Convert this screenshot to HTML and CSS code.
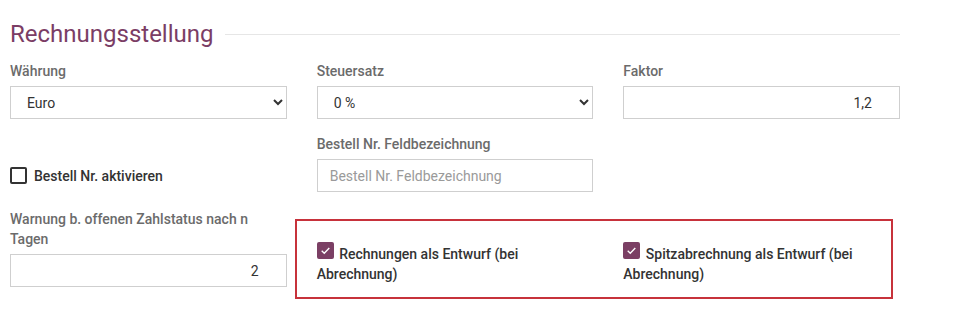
FILE: index.html
```html
<!DOCTYPE html>
<html lang="de">
<head>
<meta charset="utf-8">
<title>Rechnungsstellung</title>
<link rel="stylesheet" href="styles.css">
</head>
<body>
<section class="panel">
  <div class="section-head">
    <h2 class="section-title">Rechnungsstellung</h2>
    <span class="section-rule"></span>
  </div>
  <div class="form-grid">
    <div class="field">
      <label class="field-label">Währung</label>
      <select class="control select"><option>Euro</option></select>
    </div>
    <div class="field">
      <label class="field-label">Steuersatz</label>
      <select class="control select"><option>0 %</option></select>
    </div>
    <div class="field">
      <label class="field-label">Faktor</label>
      <input class="control num" type="text" value="1,2">
    </div>

    <div class="field field-check">
      <label class="check"><span class="box"></span><span class="check-text">Bestell Nr. aktivieren</span></label>
    </div>
    <div class="field">
      <label class="field-label">Bestell Nr. Feldbezeichnung</label>
      <input class="control" type="text" placeholder="Bestell Nr. Feldbezeichnung">
    </div>
    <div class="field"></div>

    <div class="field">
      <label class="field-label">Warnung b. offenen Zahlstatus nach n Tagen</label>
      <input class="control num" type="text" value="2">
    </div>
    <div class="field highlight">
      <label class="check check-wrap"><span class="box checked"><svg viewBox="0 0 16 16" width="11" height="11"><path d="M2.5 8.5 L6.2 12 L13.5 4.5" fill="none" stroke="#fff" stroke-width="2"/></svg></span> Rechnungen als Entwurf (bei Abrechnung)</label>
      <label class="check check-wrap"><span class="box checked"><svg viewBox="0 0 16 16" width="11" height="11"><path d="M2.5 8.5 L6.2 12 L13.5 4.5" fill="none" stroke="#fff" stroke-width="2"/></svg></span> Spitzabrechnung als Entwurf (bei Abrechnung)</label>
    </div>
  </div>
</section>
</body>
</html>
```
FILE: styles.css
```css
* { box-sizing: border-box; }
html, body { margin: 0; background: #fff; }
body {
  font-family: Roboto, "Liberation Sans", Arial, sans-serif;
  font-size: 14px;
  color: #333;
  min-height: 329px;
}
.panel {
  width: 890px;
  margin-left: 10px;
  padding-top: 18px;
  padding-bottom: 30px;
}
.section-head {
  display: flex;
  align-items: center;
  height: 32px;
}
.section-title {
  margin: 0;
  font-size: 24px;
  font-weight: 400;
  line-height: 32px;
  color: #7b3d65;
}
.section-rule {
  flex: 1;
  height: 1px;
  background: #e6e6e6;
  margin-left: 11px;
}
.form-grid {
  display: grid;
  grid-template-columns: repeat(3, 1fr);
  column-gap: 30px;
  row-gap: 15px;
  margin-top: 11px;
}
.field {
  display: flex;
  flex-direction: column;
  justify-content: flex-end;
}
.field-label {
  font-weight: 500;
  color: #6b6b6b;
  line-height: 20px;
  margin-bottom: 5px;
}
.control {
  height: 33px;
  width: 100%;
  border: 1px solid #cfcfcf;
  border-radius: 0;
  background: #fff;
  font-family: inherit;
  font-size: 14px;
  color: #333;
  padding: 0 12px;
  outline: none;
}
.control::placeholder { color: #9a9a9a; }
.select { padding-left: 12px; }
.num { text-align: right; padding-right: 27px; }
.field-check {
  justify-content: flex-end;
}
.check {
  display: flex;
  align-items: center;
  height: 33px;
  font-weight: 500;
  color: #333;
}
.box {
  width: 17px;
  height: 17px;
  border: 2px solid #333;
  border-radius: 2px;
  background: #fff;
  margin-right: 7px;
  flex: none;
}
.box svg {
  display: block;
  margin: 1px auto 0;
}
.box.checked {
  background: #7b3f64;
  border-color: #7b3f64;
}
.highlight {
  grid-column: 2 / 4;
  display: grid;
  grid-template-columns: repeat(2, 1fr);
  column-gap: 30px;
  position: relative;
  align-items: start;
  padding-top: 35px;
  padding-bottom: 3px;
}
.highlight::before {
  content: "";
  position: absolute;
  left: -22px;
  right: 7px;
  top: 12px;
  bottom: -12px;
  border: 2px solid #c7323b;
  pointer-events: none;
}
.check-wrap {
  display: block;
  height: auto;
  line-height: 20px;
  padding-right: 40px;
}
.check-wrap .box {
  display: inline-block;
  vertical-align: baseline;
  margin-right: 2px;
}
```
